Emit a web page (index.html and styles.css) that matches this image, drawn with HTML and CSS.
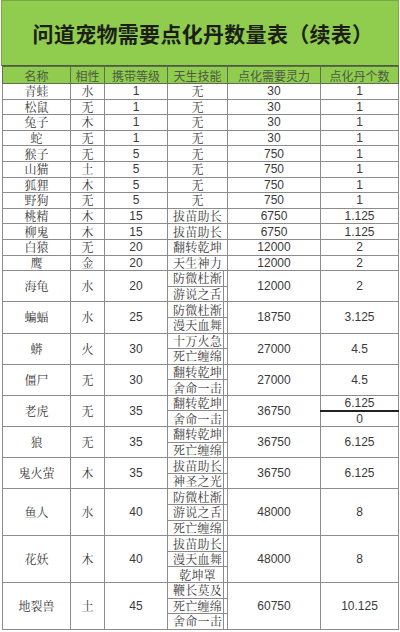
FILE: index.html
```html
<!DOCTYPE html>
<html lang="zh">
<head>
<meta charset="utf-8">
<title>问道宠物需要点化丹数量表（续表）</title>
<link rel="stylesheet" href="styles.css">
</head>
<body>
<div class="page">
  <div class="title">问道宠物需要点化丹数量表（续表）</div>
  <table class="tbl">
    <colgroup>
      <col class="c1"><col class="c2"><col class="c3"><col class="c4"><col class="c5"><col class="c6">
    </colgroup>
    <thead>
      <tr><th>名称</th><th>相性</th><th>携带等级</th><th>天生技能</th><th>点化需要灵力</th><th>点化丹个数</th></tr>
    </thead>
    <tbody>
      <tr><td class="nm">青蛙</td><td class="nm">水</td><td class="num">1</td><td class="sk">无</td><td class="num">30</td><td class="num">1</td></tr>
      <tr><td class="nm">松鼠</td><td class="nm">无</td><td class="num">1</td><td class="sk">无</td><td class="num">30</td><td class="num">1</td></tr>
      <tr><td class="nm">兔子</td><td class="nm">木</td><td class="num">1</td><td class="sk">无</td><td class="num">30</td><td class="num">1</td></tr>
      <tr><td class="nm">蛇</td><td class="nm">无</td><td class="num">1</td><td class="sk">无</td><td class="num">30</td><td class="num">1</td></tr>
      <tr><td class="nm">猴子</td><td class="nm">无</td><td class="num">5</td><td class="sk">无</td><td class="num">750</td><td class="num">1</td></tr>
      <tr><td class="nm">山猫</td><td class="nm">土</td><td class="num">5</td><td class="sk">无</td><td class="num">750</td><td class="num">1</td></tr>
      <tr><td class="nm">狐狸</td><td class="nm">木</td><td class="num">5</td><td class="sk">无</td><td class="num">750</td><td class="num">1</td></tr>
      <tr><td class="nm">野狗</td><td class="nm">无</td><td class="num">5</td><td class="sk">无</td><td class="num">750</td><td class="num">1</td></tr>
      <tr><td class="nm">桃精</td><td class="nm">木</td><td class="num">15</td><td class="sk">拔苗助长</td><td class="num">6750</td><td class="num">1.125</td></tr>
      <tr><td class="nm">柳鬼</td><td class="nm">木</td><td class="num">15</td><td class="sk">拔苗助长</td><td class="num">6750</td><td class="num">1.125</td></tr>
      <tr><td class="nm">白猿</td><td class="nm">无</td><td class="num">20</td><td class="sk">翻转乾坤</td><td class="num">12000</td><td class="num">2</td></tr>
      <tr><td class="nm">鹰</td><td class="nm">金</td><td class="num">20</td><td class="sk">天生神力</td><td class="num">12000</td><td class="num">2</td></tr>

      <tr class="grp"><td class="nm" rowspan="2">海龟</td><td class="nm" rowspan="2">水</td><td class="num" rowspan="2">20</td><td class="sk box">防微杜渐</td><td class="num" rowspan="2">12000</td><td class="num" rowspan="2">2</td></tr>
      <tr><td class="sk box">游说之舌</td></tr>

      <tr class="grp"><td class="nm" rowspan="2">蝙蝠</td><td class="nm" rowspan="2">水</td><td class="num" rowspan="2">25</td><td class="sk box">防微杜渐</td><td class="num" rowspan="2">18750</td><td class="num" rowspan="2">3.125</td></tr>
      <tr><td class="sk box">漫天血舞</td></tr>

      <tr class="grp"><td class="nm" rowspan="2">蟒</td><td class="nm" rowspan="2">火</td><td class="num" rowspan="2">30</td><td class="sk box">十万火急</td><td class="num" rowspan="2">27000</td><td class="num" rowspan="2">4.5</td></tr>
      <tr><td class="sk box">死亡缠绵</td></tr>

      <tr class="grp"><td class="nm" rowspan="2">僵尸</td><td class="nm" rowspan="2">无</td><td class="num" rowspan="2">30</td><td class="sk box">翻转乾坤</td><td class="num" rowspan="2">27000</td><td class="num" rowspan="2">4.5</td></tr>
      <tr><td class="sk box">舍命一击</td></tr>

      <tr class="grp"><td class="nm" rowspan="2">老虎</td><td class="nm" rowspan="2">无</td><td class="num" rowspan="2">35</td><td class="sk box">翻转乾坤</td><td class="num" rowspan="2">36750</td><td class="num split-top">6.125</td></tr>
      <tr><td class="sk box">舍命一击</td><td class="num">0</td></tr>

      <tr class="grp"><td class="nm" rowspan="2">狼</td><td class="nm" rowspan="2">无</td><td class="num" rowspan="2">35</td><td class="sk box">翻转乾坤</td><td class="num" rowspan="2">36750</td><td class="num" rowspan="2">6.125</td></tr>
      <tr><td class="sk box">死亡缠绵</td></tr>

      <tr class="grp"><td class="nm" rowspan="2">鬼火萤</td><td class="nm" rowspan="2">木</td><td class="num" rowspan="2">35</td><td class="sk box">拔苗助长</td><td class="num" rowspan="2">36750</td><td class="num" rowspan="2">6.125</td></tr>
      <tr><td class="sk box">神圣之光</td></tr>

      <tr class="grp"><td class="nm" rowspan="3">鱼人</td><td class="nm" rowspan="3">水</td><td class="num" rowspan="3">40</td><td class="sk box">防微杜渐</td><td class="num" rowspan="3">48000</td><td class="num" rowspan="3">8</td></tr>
      <tr><td class="sk box">游说之舌</td></tr>
      <tr><td class="sk box">死亡缠绵</td></tr>

      <tr class="grp"><td class="nm" rowspan="3">花妖</td><td class="nm" rowspan="3">木</td><td class="num" rowspan="3">40</td><td class="sk box">拔苗助长</td><td class="num" rowspan="3">48000</td><td class="num" rowspan="3">8</td></tr>
      <tr><td class="sk box">漫天血舞</td></tr>
      <tr><td class="sk box">乾坤罩</td></tr>

      <tr class="grp"><td class="nm" rowspan="3">地裂兽</td><td class="nm" rowspan="3">土</td><td class="num" rowspan="3">45</td><td class="sk box">鞭长莫及</td><td class="num" rowspan="3">60750</td><td class="num" rowspan="3">10.125</td></tr>
      <tr><td class="sk box">死亡缠绵</td></tr>
      <tr><td class="sk box">舍命一击</td></tr>
    </tbody>
  </table>
</div>
</body>
</html>
```

FILE: styles.css
```css
html, body {
  margin: 0;
  padding: 0;
  background: #ffffff;
}

.page {
  width: 400px;
  height: 632px;
  overflow: hidden;
  background: #ffffff;
}

.title {
  height: 66px;
  box-sizing: border-box;
  margin: 0 1px;
  background: #90cc4e;
  border: 1px solid #7aa846;
  border-bottom: 1px solid #4a5a3a;
  display: flex;
  align-items: center;
  justify-content: center;
  padding-left: 6px;
  font-family: "Noto Sans CJK SC", "Noto Sans", sans-serif;
  font-size: 21px;
  font-weight: 700;
  color: #1c1f18;
  letter-spacing: 0.3px;
}

.tbl {
  width: 396px;
  margin: 0 2px;
  table-layout: fixed;
  border-collapse: collapse;
}

.c1 { width: 68px; }
.c2 { width: 34px; }
.c3 { width: 63px; }
.c4 { width: 60px; }
.c5 { width: 93px; }
.c6 { width: 78px; }

.tbl th {
  height: 16px;
  padding: 0;
  background: #90cc4e;
  border: 1px solid #5f6f55;
  font-family: "Noto Sans CJK SC", "Noto Sans", sans-serif;
  font-size: 12px;
  font-weight: 400;
  line-height: 15px;
  color: #4d5a44;
  text-align: center;
  white-space: nowrap;
}

.tbl td {
  height: 15.6px;
  padding: 0;
  border: 1px solid #8c8c8c;
  text-align: center;
  line-height: 14px;
  color: #3a3a3a;
  white-space: nowrap;
  box-sizing: border-box;
}

.tbl tr.grp td {
  border-top: 1px solid #444444;
}

.nm,
.sk {
  font-family: "Noto Serif CJK SC", "Noto Sans CJK SC", serif;
  font-size: 12px;
}

.sk {
  letter-spacing: 0.2px;
}

.sk.box {
  box-shadow: inset -3px 0 0 #ffffff, inset -4px 0 0 #8c8c8c;
}

.num {
  font-family: "Liberation Sans Narrow", "Liberation Sans", Arial, sans-serif;
  font-size: 12px;
  color: #2e2e2e;
}

.tbl td.split-top {
  border-bottom: 2px solid #222222;
}
```
